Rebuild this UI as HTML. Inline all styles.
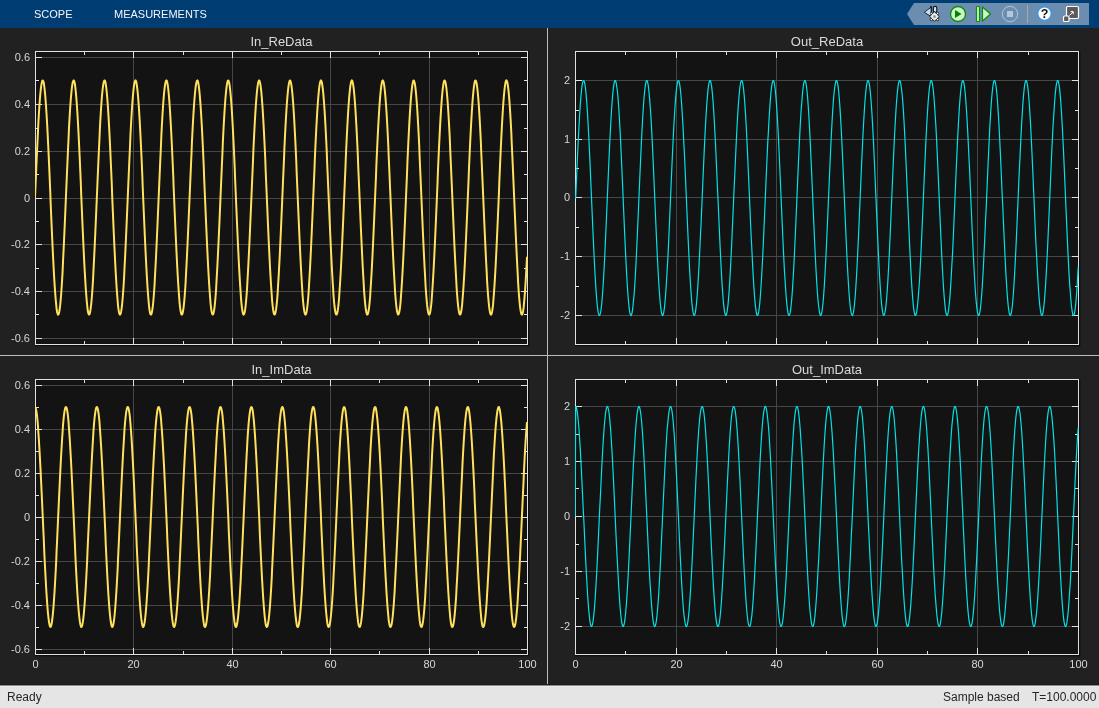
<!DOCTYPE html>
<html><head><meta charset="utf-8"><style>
svg,.tab,.st{will-change:transform}
html,body{margin:0;padding:0;width:1099px;height:708px;overflow:hidden;background:#212121;font-family:"Liberation Sans",sans-serif}
#tb{position:absolute;left:0;top:0;width:1099px;height:28px;background:#003d73}
.tab{position:absolute;top:7px;font-size:11px;color:#f2f5f8;line-height:14px;white-space:nowrap}
#sb{position:absolute;left:0;top:685px;width:1099px;height:23px;background:#e5e5e5;border-top:0;box-shadow:inset 0 1px 0 #8c8c8c, inset 0 2px 0 #ebebeb}
.st{position:absolute;top:5px;font-size:12px;line-height:14px;color:#262626;white-space:nowrap}
svg text.tl{font-size:11px;fill:#d6d6d6;font-family:"Liberation Sans",sans-serif}
svg text.tt{font-size:13px;fill:#dadada;font-family:"Liberation Sans",sans-serif}
</style></head><body>
<div id="tb">
<div class="tab" style="left:34px">SCOPE</div>
<div class="tab" style="left:114px">MEASUREMENTS</div>

<svg width="1099" height="28" style="position:absolute;left:0;top:0">
<path d="M914 3H1089V25H914L907 14Z" fill="#6a8db0"/>
<path d="M924.3 12.3 L931.3 7.2 V16.6 Z" fill="#c6e4ff" stroke="#1a1a1a" stroke-width="0.9" stroke-linejoin="round"/>
<path d="M931.3 6.2V12.5M930.2 7.3L931.3 6.2" stroke="#111" stroke-width="1.1" fill="none"/>
<rect x="933.4" y="6.4" width="3.4" height="5.8" rx="1.4" fill="#c6e4ff" stroke="#111" stroke-width="1.1"/>
<g transform="translate(934.5 16.5)">
<circle cx="-3.1" cy="-3.1" r="1.2" fill="#eee" stroke="#111" stroke-width="0.8"/>
<circle cx="3.1" cy="-3.1" r="1.2" fill="#eee" stroke="#111" stroke-width="0.8"/>
<circle cx="-3.1" cy="3.1" r="1.2" fill="#eee" stroke="#111" stroke-width="0.8"/>
<circle cx="3.1" cy="3.1" r="1.2" fill="#eee" stroke="#111" stroke-width="0.8"/>
<path d="M0 -4.9L2.3 -2.3L4.9 0L2.3 2.3L0 4.9L-2.3 2.3L-4.9 0L-2.3 -2.3Z" fill="#ececec" stroke="#111" stroke-width="0.9" stroke-linejoin="round"/>
<circle r="3" fill="#ececec"/>
<circle r="1.5" fill="#9a9a9a"/>
</g>
<circle cx="958" cy="14" r="7.5" fill="#ccf7c4" stroke="#0c8c0c" stroke-width="1.3"/>
<path d="M955 10V18L961.6 14Z" fill="#0a7d0a"/>
<rect x="976.5" y="6.5" width="3" height="15" rx="0.8" fill="#ccf7c4" stroke="#0c8c0c" stroke-width="1.2"/>
<path d="M982.5 7V21L990.5 14Z" fill="#ccf7c4" stroke="#0c8c0c" stroke-width="1.2" stroke-linejoin="round"/>
<circle cx="1010" cy="14" r="7.7" fill="none" stroke="#b2c6d8" stroke-width="1"/>
<rect x="1007" y="11" width="6" height="6" fill="#b4c8da"/>
<rect x="1027" y="5" width="1" height="18" fill="#aea89c"/>
<circle cx="1044.5" cy="13.6" r="6.8" fill="#fff" stroke="#3d96e8" stroke-width="1.4"/>
<text x="1044.6" y="18" text-anchor="middle" style="font:600 12.5px 'Liberation Sans',sans-serif" fill="#111">?</text>
<rect x="1066.5" y="6.5" width="12" height="12" rx="1.2" fill="#5b5b5b" stroke="#fff" stroke-width="1.2"/>
<path d="M1069.3 15.6L1073 11.9M1070.6 11.6H1073.2V14.2" stroke="#fff" stroke-width="1" fill="none"/>
<rect x="1063.5" y="16" width="5.5" height="5.5" rx="1" fill="#5b5b5b" stroke="#fff" stroke-width="1.2"/>
</svg>

</div>
<svg width="1099" height="657" style="position:absolute;left:0;top:28px" viewBox="0 28 1099 657">
<rect x="0" y="28" width="1099" height="657" fill="#212121"/>
<rect x="547" y="28" width="1" height="657" fill="#bdbdbd"/>
<rect x="0" y="355" width="1099" height="1" fill="#bdbdbd"/>
<rect x="35" y="51" width="493" height="294" fill="#131313"/>
<rect x="528" y="51" width="1" height="295" fill="#0e0e0e"/><rect x="529" y="51" width="1" height="296" fill="#1a1a1a"/><rect x="35" y="345" width="494" height="1" fill="#0e0e0e"/><rect x="35" y="346" width="494" height="1" fill="#1a1a1a"/>
<path d="M133.5 51V344M232.5 51V344M330.5 51V344M429.5 51V344M35 57.5H527M35 104.5H527M35 151.5H527M35 198.5H527M35 244.5H527M35 291.5H527M35 338.5H527" stroke="#464646" stroke-width="1" fill="none"/>
<path d="M35.5 51v7M35.5 345v-7M133.5 51v7M133.5 345v-7M232.5 51v7M232.5 345v-7M330.5 51v7M330.5 345v-7M429.5 51v7M429.5 345v-7M527.5 51v7M527.5 345v-7M84.5 51v4M84.5 345v-4M183.5 51v4M183.5 345v-4M281.5 51v4M281.5 345v-4M379.5 51v4M379.5 345v-4M478.5 51v4M478.5 345v-4M35 57.5h7M528 57.5h-7M35 104.5h7M528 104.5h-7M35 151.5h7M528 151.5h-7M35 198.5h7M528 198.5h-7M35 244.5h7M528 244.5h-7M35 291.5h7M528 291.5h-7M35 338.5h7M528 338.5h-7M35 80.5h4M528 80.5h-4M35 128.5h4M528 128.5h-4M35 174.5h4M528 174.5h-4M35 221.5h4M528 221.5h-4M35 268.5h4M528 268.5h-4M35 314.5h4M528 314.5h-4" stroke="#e0e0e0" stroke-width="1" fill="none"/>
<rect x="35.5" y="51.5" width="492" height="293" fill="none" stroke="#e0e0e0" stroke-width="1"/>
<clipPath id="c3551"><rect x="35" y="51" width="493" height="294"/></clipPath>
<polyline clip-path="url(#c3551)" points="35.0,197.5 35.5,185.8 36.0,174.2 36.5,162.9 37.0,151.9 37.5,141.4 38.0,131.4 38.4,122.1 38.9,113.5 39.4,105.8 39.9,99.0 40.4,93.2 40.9,88.4 41.4,84.7 41.9,82.1 42.4,80.7 42.9,80.5 43.4,81.4 43.9,83.5 44.3,86.7 44.8,91.0 45.3,96.4 45.8,102.8 46.3,110.2 46.8,118.4 47.3,127.4 47.8,137.1 48.3,147.5 48.8,158.3 49.3,169.5 49.8,181.0 50.3,192.6 50.7,204.3 51.2,216.0 51.7,227.4 52.2,238.6 52.7,249.3 53.2,259.5 53.7,269.1 54.2,278.0 54.7,286.1 55.2,293.3 55.7,299.5 56.2,304.8 56.6,308.9 57.1,312.0 57.6,313.8 58.1,314.6 58.6,314.1 59.1,312.5 59.6,309.8 60.1,305.9 60.6,300.9 61.1,294.9 61.6,288.0 62.1,280.1 62.6,271.4 63.0,262.0 63.5,251.9 64.0,241.3 64.5,230.2 65.0,218.8 65.5,207.2 66.0,195.5 66.5,183.9 67.0,172.3 67.5,161.0 68.0,150.1 68.5,139.6 68.9,129.8 69.4,120.6 69.9,112.1 70.4,104.6 70.9,97.9 71.4,92.3 71.9,87.7 72.4,84.2 72.9,81.8 73.4,80.6 73.9,80.5 74.4,81.7 74.9,83.9 75.3,87.4 75.8,91.9 76.3,97.4 76.8,104.0 77.3,111.5 77.8,119.9 78.3,129.0 78.8,138.8 79.3,149.2 79.8,160.1 80.3,171.4 80.8,182.9 81.2,194.6 81.7,206.3 82.2,217.9 82.7,229.3 83.2,240.4 83.7,251.1 84.2,261.2 84.7,270.7 85.2,279.4 85.7,287.4 86.2,294.4 86.7,300.5 87.2,305.5 87.6,309.5 88.1,312.4 88.6,314.0 89.1,314.6 89.6,313.9 90.1,312.1 90.6,309.2 91.1,305.1 91.6,300.0 92.1,293.8 92.6,286.7 93.1,278.7 93.5,269.9 94.0,260.3 94.5,250.1 95.0,239.4 95.5,228.3 96.0,216.9 96.5,205.3 97.0,193.6 97.5,181.9 98.0,170.4 98.5,159.2 99.0,148.3 99.5,137.9 99.9,128.2 100.4,119.1 100.9,110.8 101.4,103.4 101.9,96.9 102.4,91.4 102.9,87.0 103.4,83.7 103.9,81.5 104.4,80.5 104.9,80.6 105.4,82.0 105.8,84.4 106.3,88.0 106.8,92.7 107.3,98.5 107.8,105.2 108.3,112.9 108.8,121.4 109.3,130.6 109.8,140.6 110.3,151.0 110.8,162.0 111.3,173.3 111.8,184.9 112.2,196.6 112.7,208.3 113.2,219.8 113.7,231.2 114.2,242.2 114.7,252.8 115.2,262.8 115.7,272.2 116.2,280.8 116.7,288.6 117.2,295.5 117.7,301.4 118.1,306.3 118.6,310.1 119.1,312.7 119.6,314.2 120.1,314.6 120.6,313.7 121.1,311.7 121.6,308.6 122.1,304.3 122.6,299.0 123.1,292.7 123.6,285.4 124.1,277.3 124.5,268.3 125.0,258.7 125.5,248.4 126.0,237.6 126.5,226.4 127.0,214.9 127.5,203.3 128.0,191.6 128.5,180.0 129.0,168.5 129.5,157.3 130.0,146.5 130.4,136.3 130.9,126.6 131.4,117.7 131.9,109.5 132.4,102.2 132.9,95.9 133.4,90.6 133.9,86.4 134.4,83.2 134.9,81.3 135.4,80.4 135.9,80.8 136.4,82.3 136.8,85.0 137.3,88.8 137.8,93.6 138.3,99.5 138.8,106.4 139.3,114.2 139.8,122.9 140.3,132.2 140.8,142.3 141.3,152.9 141.8,163.9 142.3,175.3 142.7,186.8 143.2,198.5 143.7,210.2 144.2,221.8 144.7,233.1 145.2,244.0 145.7,254.5 146.2,264.5 146.7,273.7 147.2,282.2 147.7,289.9 148.2,296.6 148.7,302.3 149.1,307.0 149.6,310.6 150.1,313.1 150.6,314.4 151.1,314.5 151.6,313.5 152.1,311.3 152.6,308.0 153.1,303.5 153.6,298.0 154.1,291.5 154.6,284.1 155.0,275.8 155.5,266.7 156.0,257.0 156.5,246.6 157.0,235.7 157.5,224.5 158.0,213.0 158.5,201.3 159.0,189.6 159.5,178.0 160.0,166.6 160.5,155.5 161.0,144.8 161.4,134.6 161.9,125.0 162.4,116.2 162.9,108.2 163.4,101.1 163.9,94.9 164.4,89.8 164.9,85.8 165.4,82.8 165.9,81.0 166.4,80.4 166.9,81.0 167.3,82.7 167.8,85.5 168.3,89.5 168.8,94.6 169.3,100.6 169.8,107.7 170.3,115.6 170.8,124.4 171.3,133.9 171.8,144.0 172.3,154.7 172.8,165.8 173.3,177.2 173.7,188.8 174.2,200.5 174.7,212.2 175.2,223.7 175.7,235.0 176.2,245.8 176.7,256.3 177.2,266.1 177.7,275.2 178.2,283.6 178.7,291.1 179.2,297.6 179.6,303.2 180.1,307.7 180.6,311.1 181.1,313.4 181.6,314.5 182.1,314.4 182.6,313.2 183.1,310.8 183.6,307.3 184.1,302.7 184.6,297.0 185.1,290.4 185.6,282.8 186.0,274.3 186.5,265.1 187.0,255.3 187.5,244.8 188.0,233.9 188.5,222.6 189.0,211.0 189.5,199.4 190.0,187.7 190.5,176.1 191.0,164.7 191.5,153.6 191.9,143.0 192.4,132.9 192.9,123.5 193.4,114.8 193.9,107.0 194.4,100.0 194.9,94.0 195.4,89.1 195.9,85.2 196.4,82.5 196.9,80.9 197.4,80.4 197.9,81.2 198.3,83.1 198.8,86.1 199.3,90.3 199.8,95.5 200.3,101.8 200.8,109.0 201.3,117.0 201.8,125.9 202.3,135.6 202.8,145.8 203.3,156.5 203.8,167.7 204.2,179.1 204.7,190.8 205.2,202.5 205.7,214.1 206.2,225.6 206.7,236.8 207.2,247.6 207.7,257.9 208.2,267.7 208.7,276.7 209.2,284.9 209.7,292.2 210.2,298.6 210.6,304.0 211.1,308.3 211.6,311.5 212.1,313.6 212.6,314.5 213.1,314.3 213.6,312.9 214.1,310.3 214.6,306.6 215.1,301.8 215.6,296.0 216.1,289.1 216.5,281.4 217.0,272.8 217.5,263.5 218.0,253.5 218.5,243.0 219.0,232.0 219.5,220.7 220.0,209.1 220.5,197.4 221.0,185.7 221.5,174.1 222.0,162.8 222.5,151.8 222.9,141.3 223.4,131.3 223.9,122.0 224.4,113.4 224.9,105.7 225.4,98.9 225.9,93.1 226.4,88.3 226.9,84.7 227.4,82.1 227.9,80.7 228.4,80.5 228.8,81.4 229.3,83.5 229.8,86.7 230.3,91.1 230.8,96.5 231.3,102.9 231.8,110.3 232.3,118.5 232.8,127.5 233.3,137.2 233.8,147.6 234.3,158.4 234.8,169.6 235.2,181.1 235.7,192.7 236.2,204.4 236.7,216.1 237.2,227.5 237.7,238.7 238.2,249.4 238.7,259.6 239.2,269.2 239.7,278.1 240.2,286.2 240.7,293.4 241.1,299.6 241.6,304.8 242.1,308.9 242.6,312.0 243.1,313.9 243.6,314.6 244.1,314.1 244.6,312.5 245.1,309.7 245.6,305.9 246.1,300.9 246.6,294.9 247.1,287.9 247.5,280.0 248.0,271.3 248.5,261.9 249.0,251.8 249.5,241.2 250.0,230.1 250.5,218.7 251.0,207.1 251.5,195.4 252.0,183.8 252.5,172.2 253.0,160.9 253.4,150.0 253.9,139.6 254.4,129.7 254.9,120.5 255.4,112.1 255.9,104.5 256.4,97.9 256.9,92.2 257.4,87.6 257.9,84.1 258.4,81.8 258.9,80.6 259.4,80.5 259.8,81.7 260.3,84.0 260.8,87.4 261.3,91.9 261.8,97.5 262.3,104.1 262.8,111.6 263.3,120.0 263.8,129.1 264.3,138.9 264.8,149.3 265.3,160.2 265.7,171.5 266.2,183.0 266.7,194.7 267.2,206.4 267.7,218.0 268.2,229.4 268.7,240.5 269.2,251.2 269.7,261.3 270.2,270.8 270.7,279.5 271.2,287.4 271.7,294.5 272.1,300.5 272.6,305.6 273.1,309.5 273.6,312.4 274.1,314.1 274.6,314.6 275.1,313.9 275.6,312.1 276.1,309.2 276.6,305.1 277.1,300.0 277.6,293.8 278.0,286.6 278.5,278.6 279.0,269.8 279.5,260.2 280.0,250.1 280.5,239.3 281.0,228.2 281.5,216.8 282.0,205.2 282.5,193.5 283.0,181.8 283.5,170.3 284.0,159.1 284.4,148.2 284.9,137.9 285.4,128.1 285.9,119.0 286.4,110.7 286.9,103.3 287.4,96.9 287.9,91.4 288.4,87.0 288.9,83.7 289.4,81.5 289.9,80.5 290.3,80.7 290.8,82.0 291.3,84.5 291.8,88.1 292.3,92.8 292.8,98.5 293.3,105.3 293.8,112.9 294.3,121.4 294.8,130.7 295.3,140.6 295.8,151.1 296.3,162.1 296.7,173.4 297.2,185.0 297.7,196.7 298.2,208.4 298.7,219.9 299.2,231.3 299.7,242.3 300.2,252.9 300.7,262.9 301.2,272.3 301.7,280.9 302.2,288.7 302.6,295.6 303.1,301.5 303.6,306.3 304.1,310.1 304.6,312.7 305.1,314.2 305.6,314.6 306.1,313.7 306.6,311.7 307.1,308.6 307.6,304.3 308.1,299.0 308.6,292.6 309.0,285.4 309.5,277.2 310.0,268.2 310.5,258.6 311.0,248.3 311.5,237.5 312.0,226.3 312.5,214.8 313.0,203.2 313.5,191.5 314.0,179.8 314.5,168.4 314.9,157.2 315.4,146.4 315.9,136.2 316.4,126.5 316.9,117.6 317.4,109.4 317.9,102.2 318.4,95.9 318.9,90.6 319.4,86.3 319.9,83.2 320.4,81.3 320.9,80.4 321.3,80.8 321.8,82.3 322.3,85.0 322.8,88.8 323.3,93.7 323.8,99.6 324.3,106.5 324.8,114.3 325.3,122.9 325.8,132.3 326.3,142.4 326.8,153.0 327.2,164.0 327.7,175.4 328.2,186.9 328.7,198.6 329.2,210.3 329.7,221.9 330.2,233.2 330.7,244.1 331.2,254.6 331.7,264.5 332.2,273.8 332.7,282.3 333.2,289.9 333.6,296.6 334.1,302.4 334.6,307.0 335.1,310.6 335.6,313.1 336.1,314.4 336.6,314.5 337.1,313.5 337.6,311.3 338.1,307.9 338.6,303.5 339.1,298.0 339.5,291.5 340.0,284.0 340.5,275.7 341.0,266.7 341.5,256.9 342.0,246.5 342.5,235.6 343.0,224.4 343.5,212.9 344.0,201.2 344.5,189.5 345.0,177.9 345.5,166.5 345.9,155.4 346.4,144.7 346.9,134.5 347.4,125.0 347.9,116.2 348.4,108.1 348.9,101.0 349.4,94.9 349.9,89.8 350.4,85.7 350.9,82.8 351.4,81.0 351.8,80.4 352.3,81.0 352.8,82.7 353.3,85.6 353.8,89.5 354.3,94.6 354.8,100.7 355.3,107.8 355.8,115.7 356.3,124.5 356.8,134.0 357.3,144.1 357.8,154.8 358.2,165.9 358.7,177.3 359.2,188.9 359.7,200.6 360.2,212.3 360.7,223.8 361.2,235.1 361.7,245.9 362.2,256.3 362.7,266.2 363.2,275.3 363.7,283.6 364.1,291.1 364.6,297.7 365.1,303.2 365.6,307.7 366.1,311.1 366.6,313.4 367.1,314.5 367.6,314.4 368.1,313.2 368.6,310.8 369.1,307.3 369.6,302.6 370.1,297.0 370.5,290.3 371.0,282.7 371.5,274.3 372.0,265.1 372.5,255.2 373.0,244.7 373.5,233.8 374.0,222.5 374.5,210.9 375.0,199.3 375.5,187.6 376.0,176.0 376.4,164.6 376.9,153.5 377.4,142.9 377.9,132.9 378.4,123.4 378.9,114.7 379.4,106.9 379.9,99.9 380.4,94.0 380.9,89.0 381.4,85.2 381.9,82.4 382.4,80.8 382.8,80.4 383.3,81.2 383.8,83.1 384.3,86.1 384.8,90.3 385.3,95.6 385.8,101.8 386.3,109.0 386.8,117.1 387.3,126.0 387.8,135.6 388.3,145.9 388.7,156.6 389.2,167.8 389.7,179.2 390.2,190.9 390.7,202.6 391.2,214.2 391.7,225.7 392.2,236.9 392.7,247.7 393.2,258.0 393.7,267.7 394.2,276.7 394.7,284.9 395.1,292.3 395.6,298.7 396.1,304.0 396.6,308.4 397.1,311.6 397.6,313.6 398.1,314.5 398.6,314.3 399.1,312.8 399.6,310.3 400.1,306.6 400.6,301.8 401.0,295.9 401.5,289.1 402.0,281.3 402.5,272.8 403.0,263.4 403.5,253.5 404.0,242.9 404.5,231.9 405.0,220.6 405.5,209.0 406.0,197.3 406.5,185.6 407.0,174.0 407.4,162.7 407.9,151.7 408.4,141.2 408.9,131.2 409.4,121.9 409.9,113.4 410.4,105.7 410.9,98.9 411.4,93.1 411.9,88.3 412.4,84.6 412.9,82.1 413.3,80.7 413.8,80.5 414.3,81.4 414.8,83.5 415.3,86.8 415.8,91.1 416.3,96.5 416.8,103.0 417.3,110.3 417.8,118.6 418.3,127.6 418.8,137.3 419.3,147.6 419.7,158.5 420.2,169.7 420.7,181.2 421.2,192.8 421.7,204.5 422.2,216.2 422.7,227.6 423.2,238.8 423.7,249.5 424.2,259.7 424.7,269.3 425.2,278.2 425.6,286.2 426.1,293.4 426.6,299.6 427.1,304.9 427.6,309.0 428.1,312.0 428.6,313.9 429.1,314.6 429.6,314.1 430.1,312.5 430.6,309.7 431.1,305.8 431.6,300.8 432.0,294.8 432.5,287.8 433.0,280.0 433.5,271.2 434.0,261.8 434.5,251.7 435.0,241.1 435.5,230.0 436.0,218.6 436.5,207.0 437.0,195.3 437.5,183.6 437.9,172.1 438.4,160.8 438.9,149.9 439.4,139.5 439.9,129.6 440.4,120.4 440.9,112.0 441.4,104.4 441.9,97.8 442.4,92.2 442.9,87.6 443.4,84.1 443.9,81.8 444.3,80.6 444.8,80.6 445.3,81.7 445.8,84.0 446.3,87.4 446.8,92.0 447.3,97.5 447.8,104.1 448.3,111.7 448.8,120.0 449.3,129.2 449.8,139.0 450.2,149.4 450.7,160.3 451.2,171.6 451.7,183.1 452.2,194.8 452.7,206.5 453.2,218.1 453.7,229.5 454.2,240.6 454.7,251.3 455.2,261.4 455.7,270.8 456.2,279.6 456.6,287.5 457.1,294.5 457.6,300.6 458.1,305.6 458.6,309.6 459.1,312.4 459.6,314.1 460.1,314.6 460.6,313.9 461.1,312.1 461.6,309.1 462.1,305.1 462.5,299.9 463.0,293.7 463.5,286.6 464.0,278.6 464.5,269.7 465.0,260.1 465.5,250.0 466.0,239.2 466.5,228.1 467.0,216.7 467.5,205.1 468.0,193.4 468.5,181.7 468.9,170.2 469.4,159.0 469.9,148.1 470.4,137.8 470.9,128.0 471.4,119.0 471.9,110.7 472.4,103.3 472.9,96.8 473.4,91.3 473.9,86.9 474.4,83.6 474.8,81.5 475.3,80.5 475.8,80.7 476.3,82.0 476.8,84.5 477.3,88.1 477.8,92.8 478.3,98.6 478.8,105.3 479.3,113.0 479.8,121.5 480.3,130.8 480.8,140.7 481.2,151.2 481.7,162.2 482.2,173.5 482.7,185.1 483.2,196.8 483.7,208.5 484.2,220.1 484.7,231.4 485.2,242.4 485.7,253.0 486.2,263.0 486.7,272.4 487.1,281.0 487.6,288.8 488.1,295.6 488.6,301.5 489.1,306.4 489.6,310.1 490.1,312.8 490.6,314.2 491.1,314.6 491.6,313.7 492.1,311.7 492.6,308.5 493.1,304.3 493.5,298.9 494.0,292.6 494.5,285.3 495.0,277.1 495.5,268.2 496.0,258.5 496.5,248.2 497.0,237.4 497.5,226.2 498.0,214.7 498.5,203.1 499.0,191.4 499.4,179.7 499.9,168.3 500.4,157.1 500.9,146.3 501.4,136.1 501.9,126.4 502.4,117.5 502.9,109.4 503.4,102.1 503.9,95.8 504.4,90.5 504.9,86.3 505.4,83.2 505.8,81.2 506.3,80.4 506.8,80.8 507.3,82.3 507.8,85.0 508.3,88.8 508.8,93.7 509.3,99.7 509.8,106.6 510.3,114.4 510.8,123.0 511.3,132.4 511.7,142.5 512.2,153.1 512.7,164.1 513.2,175.5 513.7,187.0 514.2,198.7 514.7,210.4 515.2,222.0 515.7,233.3 516.2,244.2 516.7,254.7 517.2,264.6 517.7,273.9 518.1,282.4 518.6,290.0 519.1,296.7 519.6,302.4 520.1,307.1 520.6,310.6 521.1,313.1 521.6,314.4 522.1,314.5 522.6,313.4 523.1,311.2 523.6,307.9 524.0,303.4 524.5,297.9 525.0,291.4 525.5,284.0 526.0,275.7 526.5,266.6 527.0,256.8" fill="none" stroke="#ffe15c" stroke-width="2" stroke-linejoin="round"/>
<text x="30" y="60.5" text-anchor="end" class="tl">0.6</text>
<text x="30" y="107.5" text-anchor="end" class="tl">0.4</text>
<text x="30" y="154.5" text-anchor="end" class="tl">0.2</text>
<text x="30" y="201.5" text-anchor="end" class="tl">0</text>
<text x="30" y="247.5" text-anchor="end" class="tl">-0.2</text>
<text x="30" y="294.5" text-anchor="end" class="tl">-0.4</text>
<text x="30" y="341.5" text-anchor="end" class="tl">-0.6</text>
<text x="281.5" y="45.5" text-anchor="middle" class="tt">In_ReData</text>
<rect x="575" y="51" width="504" height="294" fill="#131313"/>
<rect x="1079" y="51" width="1" height="295" fill="#0e0e0e"/><rect x="1080" y="51" width="1" height="296" fill="#1a1a1a"/><rect x="575" y="345" width="505" height="1" fill="#0e0e0e"/><rect x="575" y="346" width="505" height="1" fill="#1a1a1a"/>
<path d="M676.5 51V344M776.5 51V344M877.5 51V344M977.5 51V344M575 80.5H1078M575 139.5H1078M575 197.5H1078M575 256.5H1078M575 315.5H1078" stroke="#464646" stroke-width="1" fill="none"/>
<path d="M575.5 51v7M575.5 345v-7M676.5 51v7M676.5 345v-7M776.5 51v7M776.5 345v-7M877.5 51v7M877.5 345v-7M977.5 51v7M977.5 345v-7M1078.5 51v7M1078.5 345v-7M625.5 51v4M625.5 345v-4M726.5 51v4M726.5 345v-4M826.5 51v4M826.5 345v-4M927.5 51v4M927.5 345v-4M1028.5 51v4M1028.5 345v-4M575 80.5h7M1079 80.5h-7M575 139.5h7M1079 139.5h-7M575 197.5h7M1079 197.5h-7M575 256.5h7M1079 256.5h-7M575 315.5h7M1079 315.5h-7M575 110.5h4M1079 110.5h-4M575 168.5h4M1079 168.5h-4M575 227.5h4M1079 227.5h-4M575 286.5h4M1079 286.5h-4" stroke="#e0e0e0" stroke-width="1" fill="none"/>
<rect x="575.5" y="51.5" width="503" height="293" fill="none" stroke="#e0e0e0" stroke-width="1"/>
<clipPath id="c57551"><rect x="575" y="51" width="504" height="294"/></clipPath>
<polyline clip-path="url(#c57551)" points="575.2,198.0 575.7,198.0 576.2,186.3 576.7,174.7 577.2,163.3 577.7,152.2 578.2,141.7 578.7,131.7 579.2,122.3 579.7,113.7 580.2,106.0 580.7,99.1 581.2,93.3 581.7,88.5 582.2,84.8 582.7,82.2 583.2,80.8 583.8,80.6 584.3,81.5 584.8,83.6 585.3,86.8 585.8,91.2 586.3,96.6 586.8,103.0 587.3,110.4 587.8,118.6 588.3,127.7 588.8,137.4 589.3,147.8 589.8,158.6 590.3,169.9 590.8,181.4 591.3,193.1 591.8,204.9 592.3,216.5 592.8,228.0 593.3,239.2 593.8,250.0 594.3,260.3 594.8,269.9 595.3,278.8 595.8,286.9 596.3,294.1 596.8,300.4 597.3,305.6 597.8,309.8 598.3,312.9 598.8,314.8 599.3,315.5 599.8,315.0 600.4,313.4 600.9,310.7 601.4,306.8 601.9,301.8 602.4,295.8 602.9,288.8 603.4,280.9 603.9,272.2 604.4,262.7 604.9,252.6 605.4,241.9 605.9,230.8 606.4,219.4 606.9,207.8 607.4,196.0 607.9,184.3 608.4,172.7 608.9,161.4 609.4,150.4 609.9,139.9 610.4,130.0 610.9,120.8 611.4,112.3 611.9,104.7 612.4,98.1 612.9,92.4 613.4,87.8 613.9,84.3 614.4,81.9 614.9,80.7 615.4,80.6 615.9,81.8 616.4,84.0 616.9,87.5 617.5,92.0 618.0,97.6 618.5,104.2 619.0,111.7 619.5,120.1 620.0,129.3 620.5,139.1 621.0,149.6 621.5,160.5 622.0,171.8 622.5,183.4 623.0,195.1 623.5,206.8 624.0,218.5 624.5,229.9 625.0,241.1 625.5,251.8 626.0,261.9 626.5,271.4 627.0,280.2 627.5,288.2 628.0,295.3 628.5,301.4 629.0,306.4 629.5,310.4 630.0,313.3 630.5,315.0 631.0,315.5 631.5,314.9 632.0,313.1 632.5,310.1 633.0,306.0 633.5,300.9 634.1,294.7 634.6,287.5 635.1,279.5 635.6,270.6 636.1,261.0 636.6,250.8 637.1,240.1 637.6,228.9 638.1,217.5 638.6,205.8 639.1,194.0 639.6,182.3 640.1,170.8 640.6,159.5 641.1,148.6 641.6,138.2 642.1,128.4 642.6,119.3 643.1,111.0 643.6,103.6 644.1,97.0 644.6,91.6 645.1,87.1 645.6,83.8 646.1,81.6 646.6,80.6 647.1,80.7 647.6,82.1 648.1,84.5 648.6,88.1 649.1,92.9 649.6,98.6 650.1,105.4 650.7,113.1 651.2,121.6 651.7,130.9 652.2,140.8 652.7,151.4 653.2,162.4 653.7,173.7 654.2,185.3 654.7,197.1 655.2,208.8 655.7,220.4 656.2,231.8 656.7,242.9 657.2,253.5 657.7,263.6 658.2,273.0 658.7,281.6 659.2,289.5 659.7,296.4 660.2,302.3 660.7,307.2 661.2,311.0 661.7,313.6 662.2,315.1 662.7,315.5 663.2,314.6 663.7,312.6 664.2,309.5 664.7,305.2 665.2,299.9 665.7,293.5 666.2,286.2 666.7,278.1 667.2,269.1 667.8,259.4 668.3,249.1 668.8,238.2 669.3,227.0 669.8,215.5 670.3,203.8 670.8,192.1 671.3,180.4 671.8,168.9 672.3,157.7 672.8,146.8 673.3,136.5 673.8,126.8 674.3,117.9 674.8,109.7 675.3,102.4 675.8,96.1 676.3,90.7 676.8,86.5 677.3,83.3 677.8,81.3 678.3,80.5 678.8,80.9 679.3,82.4 679.8,85.1 680.3,88.9 680.8,93.8 681.3,99.7 681.8,106.6 682.3,114.4 682.8,123.1 683.3,132.5 683.8,142.6 684.4,153.2 684.9,164.3 685.4,175.7 685.9,187.3 686.4,199.0 686.9,210.8 687.4,222.4 687.9,233.7 688.4,244.7 688.9,255.2 689.4,265.2 689.9,274.5 690.4,283.0 690.9,290.7 691.4,297.4 691.9,303.2 692.4,307.9 692.9,311.5 693.4,314.0 693.9,315.3 694.4,315.4 694.9,314.4 695.4,312.2 695.9,308.8 696.4,304.4 696.9,298.9 697.4,292.4 697.9,284.9 698.4,276.6 698.9,267.5 699.4,257.7 699.9,247.3 700.4,236.4 701.0,225.1 701.5,213.6 702.0,201.8 702.5,190.1 703.0,178.4 703.5,167.0 704.0,155.8 704.5,145.1 705.0,134.9 705.5,125.3 706.0,116.4 706.5,108.4 707.0,101.3 707.5,95.1 708.0,89.9 708.5,85.9 709.0,82.9 709.5,81.1 710.0,80.5 710.5,81.0 711.0,82.8 711.5,85.6 712.0,89.6 712.5,94.7 713.0,100.8 713.5,107.9 714.0,115.8 714.5,124.6 715.0,134.2 715.5,144.3 716.0,155.0 716.5,166.2 717.0,177.6 717.5,189.3 718.1,201.0 718.6,212.7 719.1,224.3 719.6,235.6 720.1,246.5 720.6,257.0 721.1,266.8 721.6,276.0 722.1,284.4 722.6,291.9 723.1,298.5 723.6,304.1 724.1,308.6 724.6,312.0 725.1,314.3 725.6,315.4 726.1,315.3 726.6,314.1 727.1,311.7 727.6,308.2 728.1,303.6 728.6,297.9 729.1,291.2 729.6,283.6 730.1,275.1 730.6,265.9 731.1,256.0 731.6,245.5 732.1,234.5 732.6,223.2 733.1,211.6 733.6,199.9 734.1,188.1 734.7,176.5 735.2,165.1 735.7,154.0 736.2,143.3 736.7,133.2 737.2,123.7 737.7,115.0 738.2,107.1 738.7,100.2 739.2,94.1 739.7,89.2 740.2,85.3 740.7,82.5 741.2,80.9 741.7,80.5 742.2,81.3 742.7,83.2 743.2,86.2 743.7,90.4 744.2,95.6 744.7,101.9 745.2,109.1 745.7,117.3 746.2,126.2 746.7,135.8 747.2,146.1 747.7,156.9 748.2,168.1 748.7,179.6 749.2,191.2 749.7,203.0 750.2,214.7 750.7,226.2 751.2,237.5 751.8,248.3 752.3,258.7 752.8,268.4 753.3,277.4 753.8,285.7 754.3,293.1 754.8,299.5 755.3,304.9 755.8,309.2 756.3,312.5 756.8,314.5 757.3,315.5 757.8,315.2 758.3,313.8 758.8,311.2 759.3,307.5 759.8,302.7 760.3,296.8 760.8,290.0 761.3,282.2 761.8,273.6 762.3,264.3 762.8,254.2 763.3,243.7 763.8,232.6 764.3,221.2 764.8,209.6 765.3,197.9 765.8,186.2 766.3,174.6 766.8,163.2 767.3,152.1 767.8,141.6 768.4,131.6 768.9,122.2 769.4,113.6 769.9,105.9 770.4,99.1 770.9,93.2 771.4,88.4 771.9,84.8 772.4,82.2 772.9,80.8 773.4,80.6 773.9,81.5 774.4,83.6 774.9,86.8 775.4,91.2 775.9,96.6 776.4,103.1 776.9,110.4 777.4,118.7 777.9,127.8 778.4,137.5 778.9,147.9 779.4,158.7 779.9,170.0 780.4,181.5 780.9,193.2 781.4,205.0 781.9,216.6 782.4,228.1 782.9,239.3 783.4,250.1 783.9,260.3 784.4,270.0 785.0,278.9 785.5,287.0 786.0,294.2 786.5,300.5 787.0,305.7 787.5,309.8 788.0,312.9 788.5,314.8 789.0,315.5 789.5,315.0 790.0,313.4 790.5,310.6 791.0,306.7 791.5,301.8 792.0,295.7 792.5,288.7 793.0,280.8 793.5,272.1 794.0,262.6 794.5,252.5 795.0,241.8 795.5,230.7 796.0,219.3 796.5,207.7 797.0,195.9 797.5,184.2 798.0,172.6 798.5,161.3 799.0,150.3 799.5,139.9 800.0,129.9 800.5,120.7 801.0,112.3 801.6,104.7 802.1,98.0 802.6,92.4 803.1,87.7 803.6,84.2 804.1,81.9 804.6,80.7 805.1,80.6 805.6,81.8 806.1,84.1 806.6,87.5 807.1,92.0 807.6,97.6 808.1,104.2 808.6,111.8 809.1,120.2 809.6,129.4 810.1,139.2 810.6,149.7 811.1,160.6 811.6,171.9 812.1,183.5 812.6,195.2 813.1,206.9 813.6,218.6 814.1,230.0 814.6,241.2 815.1,251.9 815.6,262.0 816.1,271.5 816.6,280.3 817.1,288.3 817.6,295.3 818.1,301.4 818.7,306.5 819.2,310.4 819.7,313.3 820.2,315.0 820.7,315.5 821.2,314.8 821.7,313.0 822.2,310.1 822.7,306.0 823.2,300.8 823.7,294.6 824.2,287.5 824.7,279.4 825.2,270.5 825.7,261.0 826.2,250.7 826.7,240.0 827.2,228.8 827.7,217.4 828.2,205.7 828.7,193.9 829.2,182.2 829.7,170.7 830.2,159.4 830.7,148.5 831.2,138.1 831.7,128.3 832.2,119.2 832.7,110.9 833.2,103.5 833.7,97.0 834.2,91.5 834.7,87.1 835.3,83.8 835.8,81.6 836.3,80.6 836.8,80.7 837.3,82.1 837.8,84.6 838.3,88.2 838.8,92.9 839.3,98.7 839.8,105.4 840.3,113.1 840.8,121.7 841.3,131.0 841.8,140.9 842.3,151.5 842.8,162.5 843.3,173.8 843.8,185.4 844.3,197.2 844.8,208.9 845.3,220.5 845.8,231.9 846.3,243.0 846.8,253.6 847.3,263.7 847.8,273.1 848.3,281.7 848.8,289.5 849.3,296.4 849.8,302.3 850.3,307.2 850.8,311.0 851.3,313.6 851.9,315.1 852.4,315.5 852.9,314.6 853.4,312.6 853.9,309.5 854.4,305.2 854.9,299.8 855.4,293.5 855.9,286.2 856.4,278.0 856.9,269.0 857.4,259.3 857.9,249.0 858.4,238.1 858.9,226.9 859.4,215.4 859.9,203.7 860.4,192.0 860.9,180.3 861.4,168.8 861.9,157.6 862.4,146.8 862.9,136.5 863.4,126.8 863.9,117.8 864.4,109.6 864.9,102.3 865.4,96.0 865.9,90.7 866.4,86.4 866.9,83.3 867.4,81.3 867.9,80.5 868.4,80.9 869.0,82.4 869.5,85.1 870.0,88.9 870.5,93.8 871.0,99.8 871.5,106.7 872.0,114.5 872.5,123.2 873.0,132.6 873.5,142.7 874.0,153.3 874.5,164.4 875.0,175.8 875.5,187.4 876.0,199.1 876.5,210.9 877.0,222.5 877.5,233.8 878.0,244.8 878.5,255.3 879.0,265.3 879.5,274.6 880.0,283.1 880.5,290.7 881.0,297.5 881.5,303.2 882.0,307.9 882.5,311.5 883.0,314.0 883.5,315.3 884.0,315.4 884.5,314.4 885.0,312.2 885.6,308.8 886.1,304.4 886.6,298.8 887.1,292.3 887.6,284.9 888.1,276.5 888.6,267.4 889.1,257.6 889.6,247.2 890.1,236.3 890.6,225.0 891.1,213.4 891.6,201.7 892.1,190.0 892.6,178.3 893.1,166.9 893.6,155.7 894.1,145.0 894.6,134.8 895.1,125.2 895.6,116.4 896.1,108.3 896.6,101.2 897.1,95.0 897.6,89.9 898.1,85.8 898.6,82.9 899.1,81.1 899.6,80.5 900.1,81.1 900.6,82.8 901.1,85.7 901.6,89.7 902.2,94.7 902.7,100.8 903.2,107.9 903.7,115.9 904.2,124.7 904.7,134.3 905.2,144.4 905.7,155.1 906.2,166.3 906.7,177.7 907.2,189.4 907.7,201.1 908.2,212.8 908.7,224.4 909.2,235.7 909.7,246.6 910.2,257.1 910.7,266.9 911.2,276.1 911.7,284.4 912.2,291.9 912.7,298.5 913.2,304.1 913.7,308.6 914.2,312.0 914.7,314.3 915.2,315.4 915.7,315.3 916.2,314.1 916.7,311.7 917.2,308.1 917.7,303.5 918.2,297.8 918.7,291.1 919.3,283.5 919.8,275.0 920.3,265.8 920.8,255.9 921.3,245.4 921.8,234.4 922.3,223.1 922.8,211.5 923.3,199.8 923.8,188.0 924.3,176.4 924.8,165.0 925.3,153.9 925.8,143.2 926.3,133.1 926.8,123.7 927.3,115.0 927.8,107.1 928.3,100.1 928.8,94.1 929.3,89.1 929.8,85.3 930.3,82.5 930.8,80.9 931.3,80.5 931.8,81.3 932.3,83.2 932.8,86.3 933.3,90.4 933.8,95.7 934.3,102.0 934.8,109.2 935.3,117.3 935.9,126.3 936.4,135.9 936.9,146.2 937.4,157.0 937.9,168.2 938.4,179.7 938.9,191.3 939.4,203.1 939.9,214.8 940.4,226.3 940.9,237.6 941.4,248.4 941.9,258.8 942.4,268.5 942.9,277.5 943.4,285.8 943.9,293.1 944.4,299.5 944.9,304.9 945.4,309.3 945.9,312.5 946.4,314.5 946.9,315.5 947.4,315.2 947.9,313.8 948.4,311.2 948.9,307.4 949.4,302.6 949.9,296.8 950.4,289.9 950.9,282.1 951.4,273.5 951.9,264.2 952.5,254.1 953.0,243.6 953.5,232.5 954.0,221.1 954.5,209.5 955.0,197.8 955.5,186.1 956.0,174.5 956.5,163.1 957.0,152.1 957.5,141.5 958.0,131.5 958.5,122.1 959.0,113.6 959.5,105.8 960.0,99.0 960.5,93.2 961.0,88.4 961.5,84.7 962.0,82.2 962.5,80.8 963.0,80.6 963.5,81.5 964.0,83.6 964.5,86.9 965.0,91.2 965.5,96.7 966.0,103.1 966.5,110.5 967.0,118.8 967.5,127.8 968.0,137.6 968.5,148.0 969.0,158.8 969.6,170.1 970.1,181.6 970.6,193.3 971.1,205.1 971.6,216.7 972.1,228.2 972.6,239.4 973.1,250.2 973.6,260.4 974.1,270.1 974.6,279.0 975.1,287.1 975.6,294.3 976.1,300.5 976.6,305.7 977.1,309.9 977.6,312.9 978.1,314.8 978.6,315.5 979.1,315.0 979.6,313.4 980.1,310.6 980.6,306.7 981.1,301.7 981.6,295.7 982.1,288.7 982.6,280.8 983.1,272.0 983.6,262.5 984.1,252.4 984.6,241.7 985.1,230.6 985.6,219.2 986.2,207.6 986.7,195.8 987.2,184.1 987.7,172.5 988.2,161.2 988.7,150.2 989.2,139.8 989.7,129.9 990.2,120.6 990.7,112.2 991.2,104.6 991.7,98.0 992.2,92.3 992.7,87.7 993.2,84.2 993.7,81.9 994.2,80.7 994.7,80.6 995.2,81.8 995.7,84.1 996.2,87.5 996.7,92.1 997.2,97.7 997.7,104.3 998.2,111.9 998.7,120.3 999.2,129.4 999.7,139.3 1000.2,149.8 1000.7,160.7 1001.2,172.0 1001.7,183.6 1002.2,195.3 1002.8,207.0 1003.3,218.7 1003.8,230.1 1004.3,241.3 1004.8,251.9 1005.3,262.1 1005.8,271.6 1006.3,280.4 1006.8,288.3 1007.3,295.4 1007.8,301.5 1008.3,306.5 1008.8,310.5 1009.3,313.3 1009.8,315.0 1010.3,315.5 1010.8,314.8 1011.3,313.0 1011.8,310.0 1012.3,305.9 1012.8,300.8 1013.3,294.6 1013.8,287.4 1014.3,279.3 1014.8,270.5 1015.3,260.9 1015.8,250.6 1016.3,239.9 1016.8,228.7 1017.3,217.3 1017.8,205.6 1018.3,193.8 1018.8,182.1 1019.3,170.6 1019.9,159.3 1020.4,148.4 1020.9,138.1 1021.4,128.3 1021.9,119.2 1022.4,110.9 1022.9,103.4 1023.4,96.9 1023.9,91.5 1024.4,87.0 1024.9,83.7 1025.4,81.6 1025.9,80.6 1026.4,80.7 1026.9,82.1 1027.4,84.6 1027.9,88.2 1028.4,93.0 1028.9,98.7 1029.4,105.5 1029.9,113.2 1030.4,121.7 1030.9,131.1 1031.4,141.0 1031.9,151.6 1032.4,162.6 1032.9,173.9 1033.4,185.5 1033.9,197.3 1034.4,209.0 1034.9,220.6 1035.4,232.0 1035.9,243.1 1036.5,253.7 1037.0,263.7 1037.5,273.1 1038.0,281.8 1038.5,289.6 1039.0,296.5 1039.5,302.4 1040.0,307.2 1040.5,311.0 1041.0,313.7 1041.5,315.2 1042.0,315.5 1042.5,314.6 1043.0,312.6 1043.5,309.4 1044.0,305.1 1044.5,299.8 1045.0,293.4 1045.5,286.1 1046.0,277.9 1046.5,268.9 1047.0,259.2 1047.5,248.9 1048.0,238.0 1048.5,226.8 1049.0,215.3 1049.5,203.6 1050.0,191.9 1050.5,180.2 1051.0,168.7 1051.5,157.5 1052.0,146.7 1052.5,136.4 1053.0,126.7 1053.6,117.7 1054.1,109.6 1054.6,102.3 1055.1,95.9 1055.6,90.6 1056.1,86.4 1056.6,83.3 1057.1,81.3 1057.6,80.5 1058.1,80.9 1058.6,82.4 1059.1,85.1 1059.6,88.9 1060.1,93.9 1060.6,99.8 1061.1,106.7 1061.6,114.6 1062.1,123.3 1062.6,132.7 1063.1,142.8 1063.6,153.4 1064.1,164.5 1064.6,175.9 1065.1,187.5 1065.6,199.2 1066.1,211.0 1066.6,222.6 1067.1,233.9 1067.6,244.9 1068.1,255.4 1068.6,265.4 1069.1,274.6 1069.6,283.2 1070.2,290.8 1070.7,297.5 1071.2,303.3 1071.7,308.0 1072.2,311.5 1072.7,314.0 1073.2,315.3 1073.7,315.4 1074.2,314.4 1074.7,312.1 1075.2,308.8 1075.7,304.3 1076.2,298.8 1076.7,292.3 1077.2,284.8 1077.7,276.4 1078.2,267.3" fill="none" stroke="#00e2e6" stroke-width="1.2" stroke-linejoin="round"/>
<text x="570" y="83.5" text-anchor="end" class="tl">2</text>
<text x="570" y="142.5" text-anchor="end" class="tl">1</text>
<text x="570" y="200.5" text-anchor="end" class="tl">0</text>
<text x="570" y="259.5" text-anchor="end" class="tl">-1</text>
<text x="570" y="318.5" text-anchor="end" class="tl">-2</text>
<text x="827.0" y="45.5" text-anchor="middle" class="tt">Out_ReData</text>
<rect x="35" y="379" width="493" height="276" fill="#131313"/>
<rect x="528" y="379" width="1" height="277" fill="#0e0e0e"/><rect x="529" y="379" width="1" height="278" fill="#1a1a1a"/><rect x="35" y="655" width="494" height="1" fill="#0e0e0e"/><rect x="35" y="656" width="494" height="1" fill="#1a1a1a"/>
<path d="M133.5 379V654M232.5 379V654M330.5 379V654M429.5 379V654M35 385.5H527M35 429.5H527M35 473.5H527M35 517.5H527M35 561.5H527M35 605.5H527M35 649.5H527" stroke="#464646" stroke-width="1" fill="none"/>
<path d="M35.5 379v7M35.5 655v-7M133.5 379v7M133.5 655v-7M232.5 379v7M232.5 655v-7M330.5 379v7M330.5 655v-7M429.5 379v7M429.5 655v-7M527.5 379v7M527.5 655v-7M84.5 379v4M84.5 655v-4M183.5 379v4M183.5 655v-4M281.5 379v4M281.5 655v-4M379.5 379v4M379.5 655v-4M478.5 379v4M478.5 655v-4M35 385.5h7M528 385.5h-7M35 429.5h7M528 429.5h-7M35 473.5h7M528 473.5h-7M35 517.5h7M528 517.5h-7M35 561.5h7M528 561.5h-7M35 605.5h7M528 605.5h-7M35 649.5h7M528 649.5h-7M35 407.5h4M528 407.5h-4M35 451.5h4M528 451.5h-4M35 495.5h4M528 495.5h-4M35 539.5h4M528 539.5h-4M35 583.5h4M528 583.5h-4M35 627.5h4M528 627.5h-4" stroke="#e0e0e0" stroke-width="1" fill="none"/>
<rect x="35.5" y="379.5" width="492" height="275" fill="none" stroke="#e0e0e0" stroke-width="1"/>
<clipPath id="c35379"><rect x="35" y="379" width="493" height="276"/></clipPath>
<polyline clip-path="url(#c35379)" points="35.0,407.0 35.5,407.5 36.0,409.2 36.5,411.9 37.0,415.7 37.5,420.5 38.0,426.2 38.4,432.9 38.9,440.4 39.4,448.6 39.9,457.6 40.4,467.1 40.9,477.1 41.4,487.6 41.9,498.3 42.4,509.2 42.9,520.2 43.4,531.2 43.9,542.0 44.3,552.6 44.8,562.8 45.3,572.5 45.8,581.7 46.3,590.3 46.8,598.1 47.3,605.1 47.8,611.3 48.3,616.4 48.8,620.6 49.3,623.8 49.8,625.9 50.3,626.9 50.7,626.8 51.2,625.6 51.7,623.3 52.2,620.0 52.7,615.6 53.2,610.3 53.7,604.0 54.2,596.9 54.7,588.9 55.2,580.2 55.7,570.9 56.2,561.1 56.6,550.8 57.1,540.2 57.6,529.3 58.1,518.4 58.6,507.4 59.1,496.5 59.6,485.8 60.1,475.4 60.6,465.5 61.1,456.0 61.6,447.2 62.1,439.0 62.6,431.7 63.0,425.2 63.5,419.6 64.0,415.0 64.5,411.4 65.0,408.8 65.5,407.4 66.0,407.0 66.5,407.7 67.0,409.6 67.5,412.5 68.0,416.4 68.5,421.4 68.9,427.3 69.4,434.1 69.9,441.7 70.4,450.1 70.9,459.1 71.4,468.8 71.9,478.9 72.4,489.4 72.9,500.1 73.4,511.1 73.9,522.1 74.4,533.0 74.9,543.8 75.3,554.3 75.8,564.5 76.3,574.1 76.8,583.2 77.3,591.7 77.8,599.4 78.3,606.2 78.8,612.2 79.3,617.2 79.8,621.2 80.3,624.2 80.8,626.1 81.2,627.0 81.7,626.7 82.2,625.3 82.7,622.9 83.2,619.3 83.7,614.8 84.2,609.3 84.7,602.9 85.2,595.6 85.7,587.5 86.2,578.7 86.7,569.3 87.2,559.4 87.6,549.0 88.1,538.4 88.6,527.5 89.1,516.5 89.6,505.5 90.1,494.7 90.6,484.0 91.1,473.7 91.6,463.8 92.1,454.5 92.6,445.8 93.1,437.8 93.5,430.5 94.0,424.2 94.5,418.7 95.0,414.3 95.5,410.9 96.0,408.5 96.5,407.2 97.0,407.1 97.5,408.0 98.0,410.0 98.5,413.1 99.0,417.2 99.5,422.3 99.9,428.4 100.4,435.3 100.9,443.1 101.4,451.6 101.9,460.7 102.4,470.4 102.9,480.6 103.4,491.2 103.9,502.0 104.4,512.9 104.9,523.9 105.4,534.8 105.8,545.6 106.3,556.0 106.8,566.1 107.3,575.7 107.8,584.7 108.3,593.0 108.8,600.6 109.3,607.3 109.8,613.1 110.3,618.0 110.8,621.8 111.3,624.6 111.8,626.4 112.2,627.0 112.7,626.5 113.2,625.0 113.7,622.3 114.2,618.7 114.7,614.0 115.2,608.3 115.7,601.7 116.2,594.3 116.7,586.1 117.2,577.2 117.7,567.7 118.1,557.7 118.6,547.3 119.1,536.6 119.6,525.7 120.1,514.7 120.6,503.7 121.1,492.9 121.6,482.3 122.1,472.0 122.6,462.2 123.1,453.0 123.6,444.4 124.1,436.5 124.5,429.4 125.0,423.2 125.5,417.9 126.0,413.7 126.5,410.4 127.0,408.2 127.5,407.1 128.0,407.1 128.5,408.2 129.0,410.4 129.5,413.7 130.0,418.0 130.4,423.2 130.9,429.5 131.4,436.5 131.9,444.4 132.4,453.1 132.9,462.3 133.4,472.1 133.9,482.4 134.4,493.0 134.9,503.8 135.4,514.8 135.9,525.8 136.4,536.7 136.8,547.4 137.3,557.8 137.8,567.8 138.3,577.3 138.8,586.1 139.3,594.3 139.8,601.8 140.3,608.3 140.8,614.0 141.3,618.7 141.8,622.4 142.3,625.0 142.7,626.5 143.2,627.0 143.7,626.3 144.2,624.6 144.7,621.8 145.2,617.9 145.7,613.1 146.2,607.2 146.7,600.5 147.2,592.9 147.7,584.6 148.2,575.6 148.7,566.0 149.1,556.0 149.6,545.5 150.1,534.7 150.6,523.8 151.1,512.8 151.6,501.9 152.1,491.1 152.6,480.5 153.1,470.3 153.6,460.6 154.1,451.5 154.6,443.0 155.0,435.2 155.5,428.3 156.0,422.2 156.5,417.1 157.0,413.0 157.5,410.0 158.0,408.0 158.5,407.1 159.0,407.2 159.5,408.5 160.0,410.9 160.5,414.3 161.0,418.8 161.4,424.2 161.9,430.6 162.4,437.8 162.9,445.8 163.4,454.6 163.9,463.9 164.4,473.8 164.9,484.1 165.4,494.8 165.9,505.6 166.4,516.6 166.9,527.6 167.3,538.5 167.8,549.1 168.3,559.5 168.8,569.4 169.3,578.8 169.8,587.6 170.3,595.6 170.8,602.9 171.3,609.4 171.8,614.9 172.3,619.4 172.8,622.9 173.3,625.3 173.7,626.7 174.2,627.0 174.7,626.1 175.2,624.2 175.7,621.2 176.2,617.2 176.7,612.1 177.2,606.2 177.7,599.3 178.2,591.6 178.7,583.1 179.2,574.0 179.6,564.4 180.1,554.2 180.6,543.7 181.1,532.9 181.6,522.0 182.1,511.0 182.6,500.0 183.1,489.3 183.6,478.8 184.1,468.7 184.6,459.0 185.1,450.0 185.6,441.6 186.0,434.0 186.5,427.2 187.0,421.3 187.5,416.4 188.0,412.4 188.5,409.6 189.0,407.7 189.5,407.0 190.0,407.4 190.5,408.9 191.0,411.4 191.5,415.0 191.9,419.6 192.4,425.2 192.9,431.7 193.4,439.1 193.9,447.3 194.4,456.1 194.9,465.5 195.4,475.5 195.9,485.9 196.4,496.6 196.9,507.5 197.4,518.5 197.9,529.4 198.3,540.3 198.8,550.9 199.3,561.2 199.8,571.0 200.3,580.3 200.8,589.0 201.3,596.9 201.8,604.1 202.3,610.3 202.8,615.7 203.3,620.0 203.8,623.4 204.2,625.6 204.7,626.8 205.2,626.9 205.7,625.9 206.2,623.8 206.7,620.6 207.2,616.4 207.7,611.2 208.2,605.1 208.7,598.0 209.2,590.2 209.7,581.7 210.2,572.4 210.6,562.7 211.1,552.5 211.6,541.9 212.1,531.1 212.6,520.1 213.1,509.1 213.6,498.2 214.1,487.5 214.6,477.0 215.1,467.0 215.6,457.5 216.1,448.5 216.5,440.3 217.0,432.8 217.5,426.2 218.0,420.4 218.5,415.6 219.0,411.9 219.5,409.2 220.0,407.5 220.5,407.0 221.0,407.6 221.5,409.2 222.0,411.9 222.5,415.7 222.9,420.5 223.4,426.3 223.9,432.9 224.4,440.4 224.9,448.7 225.4,457.6 225.9,467.2 226.4,477.2 226.9,487.7 227.4,498.4 227.9,509.3 228.4,520.3 228.8,531.3 229.3,542.1 229.8,552.7 230.3,562.9 230.8,572.6 231.3,581.8 231.8,590.4 232.3,598.2 232.8,605.2 233.3,611.3 233.8,616.5 234.3,620.7 234.8,623.8 235.2,625.9 235.7,626.9 236.2,626.8 236.7,625.6 237.2,623.3 237.7,620.0 238.2,615.6 238.7,610.2 239.2,603.9 239.7,596.8 240.2,588.8 240.7,580.2 241.1,570.8 241.6,561.0 242.1,550.7 242.6,540.1 243.1,529.2 243.6,518.3 244.1,507.3 244.6,496.4 245.1,485.7 245.6,475.3 246.1,465.4 246.6,455.9 247.1,447.1 247.5,439.0 248.0,431.6 248.5,425.1 249.0,419.5 249.5,414.9 250.0,411.4 250.5,408.8 251.0,407.4 251.5,407.0 252.0,407.8 252.5,409.6 253.0,412.5 253.4,416.5 253.9,421.4 254.4,427.3 254.9,434.1 255.4,441.8 255.9,450.2 256.4,459.2 256.9,468.8 257.4,479.0 257.9,489.5 258.4,500.2 258.9,511.2 259.4,522.2 259.8,533.1 260.3,543.9 260.8,554.4 261.3,564.5 261.8,574.2 262.3,583.3 262.8,591.7 263.3,599.4 263.8,606.3 264.3,612.2 264.8,617.3 265.3,621.3 265.7,624.3 266.2,626.2 266.7,627.0 267.2,626.7 267.7,625.3 268.2,622.8 268.7,619.3 269.2,614.8 269.7,609.2 270.2,602.8 270.7,595.5 271.2,587.4 271.7,578.6 272.1,569.2 272.6,559.3 273.1,548.9 273.6,538.3 274.1,527.4 274.6,516.4 275.1,505.4 275.6,494.6 276.1,483.9 276.6,473.6 277.1,463.8 277.6,454.4 278.0,445.7 278.5,437.7 279.0,430.5 279.5,424.1 280.0,418.7 280.5,414.3 281.0,410.9 281.5,408.5 282.0,407.2 282.5,407.1 283.0,408.0 283.5,410.0 284.0,413.1 284.4,417.2 284.9,422.3 285.4,428.4 285.9,435.4 286.4,443.1 286.9,451.6 287.4,460.8 287.9,470.5 288.4,480.7 288.9,491.3 289.4,502.1 289.9,513.0 290.3,524.0 290.8,534.9 291.3,545.7 291.8,556.1 292.3,566.2 292.8,575.8 293.3,584.8 293.8,593.1 294.3,600.6 294.8,607.3 295.3,613.2 295.8,618.0 296.3,621.9 296.7,624.7 297.2,626.4 297.7,627.0 298.2,626.5 298.7,625.0 299.2,622.3 299.7,618.6 300.2,613.9 300.7,608.2 301.2,601.6 301.7,594.2 302.2,586.0 302.6,577.1 303.1,567.6 303.6,557.6 304.1,547.2 304.6,536.5 305.1,525.6 305.6,514.6 306.1,503.6 306.6,492.8 307.1,482.2 307.6,471.9 308.1,462.1 308.6,452.9 309.0,444.3 309.5,436.4 310.0,429.3 310.5,423.1 311.0,417.9 311.5,413.6 312.0,410.4 312.5,408.2 313.0,407.1 313.5,407.1 314.0,408.3 314.5,410.5 314.9,413.7 315.4,418.0 315.9,423.3 316.4,429.5 316.9,436.6 317.4,444.5 317.9,453.1 318.4,462.4 318.9,472.2 319.4,482.5 319.9,493.1 320.4,503.9 320.9,514.9 321.3,525.8 321.8,536.8 322.3,547.5 322.8,557.9 323.3,567.8 323.8,577.3 324.3,586.2 324.8,594.4 325.3,601.8 325.8,608.4 326.3,614.0 326.8,618.7 327.2,622.4 327.7,625.0 328.2,626.6 328.7,627.0 329.2,626.3 329.7,624.6 330.2,621.8 330.7,617.9 331.2,613.0 331.7,607.2 332.2,600.4 332.7,592.9 333.2,584.5 333.6,575.5 334.1,565.9 334.6,555.9 335.1,545.4 335.6,534.6 336.1,523.7 336.6,512.7 337.1,501.8 337.6,491.0 338.1,480.4 338.6,470.3 339.1,460.5 339.5,451.4 340.0,442.9 340.5,435.2 341.0,428.2 341.5,422.2 342.0,417.1 342.5,413.0 343.0,409.9 343.5,408.0 344.0,407.1 344.5,407.3 345.0,408.6 345.5,410.9 345.9,414.4 346.4,418.8 346.9,424.3 347.4,430.7 347.9,437.9 348.4,445.9 348.9,454.6 349.4,464.0 349.9,473.9 350.4,484.2 350.9,494.9 351.4,505.7 351.8,516.7 352.3,527.7 352.8,538.6 353.3,549.2 353.8,559.6 354.3,569.5 354.8,578.9 355.3,587.6 355.8,595.7 356.3,603.0 356.8,609.4 357.3,614.9 357.8,619.4 358.2,622.9 358.7,625.3 359.2,626.7 359.7,627.0 360.2,626.1 360.7,624.2 361.2,621.2 361.7,617.1 362.2,612.1 362.7,606.1 363.2,599.2 363.7,591.5 364.1,583.1 364.6,574.0 365.1,564.3 365.6,554.1 366.1,543.6 366.6,532.8 367.1,521.9 367.6,510.9 368.1,499.9 368.6,489.2 369.1,478.7 369.6,468.6 370.1,459.0 370.5,449.9 371.0,441.6 371.5,433.9 372.0,427.2 372.5,421.3 373.0,416.3 373.5,412.4 374.0,409.5 374.5,407.7 375.0,407.0 375.5,407.4 376.0,408.9 376.4,411.4 376.9,415.1 377.4,419.7 377.9,425.3 378.4,431.8 378.9,439.2 379.4,447.3 379.9,456.2 380.4,465.6 380.9,475.6 381.4,486.0 381.9,496.7 382.4,507.6 382.8,518.6 383.3,529.5 383.8,540.4 384.3,551.0 384.8,561.3 385.3,571.1 385.8,580.4 386.3,589.0 386.8,597.0 387.3,604.1 387.8,610.4 388.3,615.7 388.7,620.1 389.2,623.4 389.7,625.7 390.2,626.8 390.7,626.9 391.2,625.9 391.7,623.8 392.2,620.6 392.7,616.4 393.2,611.2 393.7,605.0 394.2,598.0 394.7,590.1 395.1,581.6 395.6,572.4 396.1,562.6 396.6,552.4 397.1,541.8 397.6,531.0 398.1,520.0 398.6,509.0 399.1,498.1 399.6,487.4 400.1,477.0 400.6,466.9 401.0,457.4 401.5,448.5 402.0,440.2 402.5,432.7 403.0,426.1 403.5,420.4 404.0,415.6 404.5,411.9 405.0,409.2 405.5,407.5 406.0,407.0 406.5,407.6 407.0,409.2 407.4,412.0 407.9,415.8 408.4,420.6 408.9,426.3 409.4,433.0 409.9,440.5 410.4,448.8 410.9,457.7 411.4,467.3 411.9,477.3 412.4,487.8 412.9,498.5 413.3,509.4 413.8,520.4 414.3,531.4 414.8,542.2 415.3,552.7 415.8,563.0 416.3,572.7 416.8,581.9 417.3,590.4 417.8,598.2 418.3,605.2 418.8,611.4 419.3,616.5 419.7,620.7 420.2,623.9 420.7,625.9 421.2,626.9 421.7,626.8 422.2,625.6 422.7,623.3 423.2,619.9 423.7,615.6 424.2,610.2 424.7,603.9 425.2,596.7 425.6,588.8 426.1,580.1 426.6,570.8 427.1,560.9 427.6,550.6 428.1,540.0 428.6,529.1 429.1,518.2 429.6,507.2 430.1,496.3 430.6,485.6 431.1,475.2 431.6,465.3 432.0,455.9 432.5,447.0 433.0,438.9 433.5,431.6 434.0,425.1 434.5,419.5 435.0,414.9 435.5,411.3 436.0,408.8 436.5,407.4 437.0,407.0 437.5,407.8 437.9,409.6 438.4,412.5 438.9,416.5 439.4,421.5 439.9,427.4 440.4,434.2 440.9,441.8 441.4,450.2 441.9,459.3 442.4,468.9 442.9,479.1 443.4,489.6 443.9,500.3 444.3,511.3 444.8,522.3 445.3,533.2 445.8,544.0 446.3,554.5 446.8,564.6 447.3,574.3 447.8,583.4 448.3,591.8 448.8,599.5 449.3,606.3 449.8,612.3 450.2,617.3 450.7,621.3 451.2,624.3 451.7,626.2 452.2,627.0 452.7,626.7 453.2,625.3 453.7,622.8 454.2,619.3 454.7,614.7 455.2,609.2 455.7,602.7 456.2,595.4 456.6,587.3 457.1,578.5 457.6,569.1 458.1,559.2 458.6,548.9 459.1,538.2 459.6,527.3 460.1,516.3 460.6,505.3 461.1,494.5 461.6,483.8 462.1,473.5 462.5,463.7 463.0,454.3 463.5,445.6 464.0,437.6 464.5,430.4 465.0,424.1 465.5,418.7 466.0,414.2 466.5,410.8 467.0,408.5 467.5,407.2 468.0,407.1 468.5,408.0 468.9,410.0 469.4,413.1 469.9,417.3 470.4,422.4 470.9,428.5 471.4,435.4 471.9,443.2 472.4,451.7 472.9,460.9 473.4,470.6 473.9,480.8 474.4,491.3 474.8,502.2 475.3,513.1 475.8,524.1 476.3,535.0 476.8,545.8 477.3,556.2 477.8,566.3 478.3,575.9 478.8,584.8 479.3,593.1 479.8,600.7 480.3,607.4 480.8,613.2 481.2,618.0 481.7,621.9 482.2,624.7 482.7,626.4 483.2,627.0 483.7,626.5 484.2,624.9 484.7,622.3 485.2,618.6 485.7,613.9 486.2,608.2 486.7,601.6 487.1,594.1 487.6,585.9 488.1,577.0 488.6,567.5 489.1,557.5 489.6,547.1 490.1,536.4 490.6,525.5 491.1,514.5 491.6,503.5 492.1,492.7 492.6,482.1 493.1,471.8 493.5,462.1 494.0,452.8 494.5,444.2 495.0,436.3 495.5,429.3 496.0,423.1 496.5,417.8 497.0,413.6 497.5,410.4 498.0,408.2 498.5,407.1 499.0,407.1 499.4,408.3 499.9,410.5 500.4,413.8 500.9,418.1 501.4,423.4 501.9,429.6 502.4,436.7 502.9,444.6 503.4,453.2 503.9,462.5 504.4,472.3 504.9,482.5 505.4,493.1 505.8,504.0 506.3,515.0 506.8,525.9 507.3,536.8 507.8,547.5 508.3,557.9 508.8,567.9 509.3,577.4 509.8,586.3 510.3,594.5 510.8,601.9 511.3,608.4 511.7,614.1 512.2,618.8 512.7,622.4 513.2,625.0 513.7,626.6 514.2,627.0 514.7,626.3 515.2,624.6 515.7,621.7 516.2,617.9 516.7,613.0 517.2,607.1 517.7,600.4 518.1,592.8 518.6,584.5 519.1,575.4 519.6,565.9 520.1,555.8 520.6,545.3 521.1,534.5 521.6,523.6 522.1,512.6 522.6,501.7 523.1,490.9 523.6,480.3 524.0,470.2 524.5,460.5 525.0,451.3 525.5,442.8 526.0,435.1 526.5,428.2 527.0,422.1" fill="none" stroke="#ffe15c" stroke-width="2" stroke-linejoin="round"/>
<text x="30" y="388.5" text-anchor="end" class="tl">0.6</text>
<text x="30" y="432.5" text-anchor="end" class="tl">0.4</text>
<text x="30" y="476.5" text-anchor="end" class="tl">0.2</text>
<text x="30" y="520.5" text-anchor="end" class="tl">0</text>
<text x="30" y="564.5" text-anchor="end" class="tl">-0.2</text>
<text x="30" y="608.5" text-anchor="end" class="tl">-0.4</text>
<text x="30" y="652.5" text-anchor="end" class="tl">-0.6</text>
<text x="35.5" y="668" text-anchor="middle" class="tl">0</text>
<text x="133.5" y="668" text-anchor="middle" class="tl">20</text>
<text x="232.5" y="668" text-anchor="middle" class="tl">40</text>
<text x="330.5" y="668" text-anchor="middle" class="tl">60</text>
<text x="429.5" y="668" text-anchor="middle" class="tl">80</text>
<text x="527.5" y="668" text-anchor="middle" class="tl">100</text>
<text x="281.5" y="373.5" text-anchor="middle" class="tt">In_ImData</text>
<rect x="575" y="379" width="504" height="276" fill="#131313"/>
<rect x="1079" y="379" width="1" height="277" fill="#0e0e0e"/><rect x="1080" y="379" width="1" height="278" fill="#1a1a1a"/><rect x="575" y="655" width="505" height="1" fill="#0e0e0e"/><rect x="575" y="656" width="505" height="1" fill="#1a1a1a"/>
<path d="M676.5 379V654M776.5 379V654M877.5 379V654M977.5 379V654M575 406.5H1078M575 461.5H1078M575 516.5H1078M575 571.5H1078M575 626.5H1078" stroke="#464646" stroke-width="1" fill="none"/>
<path d="M575.5 379v7M575.5 655v-7M676.5 379v7M676.5 655v-7M776.5 379v7M776.5 655v-7M877.5 379v7M877.5 655v-7M977.5 379v7M977.5 655v-7M1078.5 379v7M1078.5 655v-7M625.5 379v4M625.5 655v-4M726.5 379v4M726.5 655v-4M826.5 379v4M826.5 655v-4M927.5 379v4M927.5 655v-4M1028.5 379v4M1028.5 655v-4M575 406.5h7M1079 406.5h-7M575 461.5h7M1079 461.5h-7M575 516.5h7M1079 516.5h-7M575 571.5h7M1079 571.5h-7M575 626.5h7M1079 626.5h-7M575 434.5h4M1079 434.5h-4M575 488.5h4M1079 488.5h-4M575 544.5h4M1079 544.5h-4M575 598.5h4M1079 598.5h-4" stroke="#e0e0e0" stroke-width="1" fill="none"/>
<rect x="575.5" y="379.5" width="503" height="275" fill="none" stroke="#e0e0e0" stroke-width="1"/>
<clipPath id="c575379"><rect x="575" y="379" width="504" height="276"/></clipPath>
<polyline clip-path="url(#c575379)" points="575.2,516.5 575.7,406.5 576.2,407.0 576.7,408.7 577.2,411.4 577.7,415.2 578.2,420.0 578.7,425.7 579.2,432.4 579.7,439.9 580.2,448.1 580.7,457.1 581.2,466.6 581.7,476.6 582.2,487.1 582.7,497.8 583.2,508.7 583.8,519.7 584.3,530.7 584.8,541.5 585.3,552.1 585.8,562.3 586.3,572.0 586.8,581.2 587.3,589.8 587.8,597.6 588.3,604.6 588.8,610.8 589.3,615.9 589.8,620.1 590.3,623.3 590.8,625.4 591.3,626.4 591.8,626.3 592.3,625.1 592.8,622.8 593.3,619.5 593.8,615.1 594.3,609.8 594.8,603.5 595.3,596.4 595.8,588.4 596.3,579.7 596.8,570.4 597.3,560.6 597.8,550.3 598.3,539.7 598.8,528.8 599.3,517.9 599.8,506.9 600.4,496.0 600.9,485.3 601.4,474.9 601.9,465.0 602.4,455.5 602.9,446.7 603.4,438.5 603.9,431.2 604.4,424.7 604.9,419.1 605.4,414.5 605.9,410.9 606.4,408.3 606.9,406.9 607.4,406.5 607.9,407.2 608.4,409.1 608.9,412.0 609.4,415.9 609.9,420.9 610.4,426.8 610.9,433.6 611.4,441.2 611.9,449.6 612.4,458.6 612.9,468.3 613.4,478.4 613.9,488.9 614.4,499.6 614.9,510.6 615.4,521.6 615.9,532.5 616.4,543.3 616.9,553.8 617.5,564.0 618.0,573.6 618.5,582.7 619.0,591.2 619.5,598.9 620.0,605.7 620.5,611.7 621.0,616.7 621.5,620.7 622.0,623.7 622.5,625.6 623.0,626.5 623.5,626.2 624.0,624.8 624.5,622.4 625.0,618.8 625.5,614.3 626.0,608.8 626.5,602.4 627.0,595.1 627.5,587.0 628.0,578.2 628.5,568.8 629.0,558.9 629.5,548.5 630.0,537.9 630.5,527.0 631.0,516.0 631.5,505.0 632.0,494.2 632.5,483.5 633.0,473.2 633.5,463.3 634.1,454.0 634.6,445.3 635.1,437.3 635.6,430.0 636.1,423.7 636.6,418.2 637.1,413.8 637.6,410.4 638.1,408.0 638.6,406.7 639.1,406.6 639.6,407.5 640.1,409.5 640.6,412.6 641.1,416.7 641.6,421.8 642.1,427.9 642.6,434.8 643.1,442.6 643.6,451.1 644.1,460.2 644.6,469.9 645.1,480.1 645.6,490.7 646.1,501.5 646.6,512.4 647.1,523.4 647.6,534.3 648.1,545.1 648.6,555.5 649.1,565.6 649.6,575.2 650.1,584.2 650.7,592.5 651.2,600.1 651.7,606.8 652.2,612.6 652.7,617.5 653.2,621.3 653.7,624.1 654.2,625.9 654.7,626.5 655.2,626.0 655.7,624.5 656.2,621.8 656.7,618.2 657.2,613.5 657.7,607.8 658.2,601.2 658.7,593.8 659.2,585.6 659.7,576.7 660.2,567.2 660.7,557.2 661.2,546.8 661.7,536.1 662.2,525.2 662.7,514.2 663.2,503.2 663.7,492.4 664.2,481.8 664.7,471.5 665.2,461.7 665.7,452.5 666.2,443.9 666.7,436.0 667.2,428.9 667.8,422.7 668.3,417.4 668.8,413.2 669.3,409.9 669.8,407.7 670.3,406.6 670.8,406.6 671.3,407.7 671.8,409.9 672.3,413.2 672.8,417.5 673.3,422.7 673.8,429.0 674.3,436.0 674.8,443.9 675.3,452.6 675.8,461.8 676.3,471.6 676.8,481.9 677.3,492.5 677.8,503.3 678.3,514.3 678.8,525.3 679.3,536.2 679.8,546.9 680.3,557.3 680.8,567.3 681.3,576.8 681.8,585.6 682.3,593.8 682.8,601.3 683.3,607.8 683.8,613.5 684.4,618.2 684.9,621.9 685.4,624.5 685.9,626.0 686.4,626.5 686.9,625.8 687.4,624.1 687.9,621.3 688.4,617.4 688.9,612.6 689.4,606.7 689.9,600.0 690.4,592.4 690.9,584.1 691.4,575.1 691.9,565.5 692.4,555.5 692.9,545.0 693.4,534.2 693.9,523.3 694.4,512.3 694.9,501.4 695.4,490.6 695.9,480.0 696.4,469.8 696.9,460.1 697.4,451.0 697.9,442.5 698.4,434.7 698.9,427.8 699.4,421.7 699.9,416.6 700.4,412.5 701.0,409.5 701.5,407.5 702.0,406.6 702.5,406.7 703.0,408.0 703.5,410.4 704.0,413.8 704.5,418.3 705.0,423.7 705.5,430.1 706.0,437.3 706.5,445.3 707.0,454.1 707.5,463.4 708.0,473.3 708.5,483.6 709.0,494.3 709.5,505.1 710.0,516.1 710.5,527.1 711.0,538.0 711.5,548.6 712.0,559.0 712.5,568.9 713.0,578.3 713.5,587.1 714.0,595.1 714.5,602.4 715.0,608.9 715.5,614.4 716.0,618.9 716.5,622.4 717.0,624.8 717.5,626.2 718.1,626.5 718.6,625.6 719.1,623.7 719.6,620.7 720.1,616.7 720.6,611.6 721.1,605.7 721.6,598.8 722.1,591.1 722.6,582.6 723.1,573.5 723.6,563.9 724.1,553.7 724.6,543.2 725.1,532.4 725.6,521.5 726.1,510.5 726.6,499.5 727.1,488.8 727.6,478.3 728.1,468.2 728.6,458.5 729.1,449.5 729.6,441.1 730.1,433.5 730.6,426.7 731.1,420.8 731.6,415.9 732.1,411.9 732.6,409.1 733.1,407.2 733.6,406.5 734.1,406.9 734.7,408.4 735.2,410.9 735.7,414.5 736.2,419.1 736.7,424.7 737.2,431.2 737.7,438.6 738.2,446.8 738.7,455.6 739.2,465.0 739.7,475.0 740.2,485.4 740.7,496.1 741.2,507.0 741.7,518.0 742.2,528.9 742.7,539.8 743.2,550.4 743.7,560.7 744.2,570.5 744.7,579.8 745.2,588.5 745.7,596.4 746.2,603.6 746.7,609.8 747.2,615.2 747.7,619.5 748.2,622.9 748.7,625.1 749.2,626.3 749.7,626.4 750.2,625.4 750.7,623.3 751.2,620.1 751.8,615.9 752.3,610.7 752.8,604.6 753.3,597.5 753.8,589.7 754.3,581.2 754.8,571.9 755.3,562.2 755.8,552.0 756.3,541.4 756.8,530.6 757.3,519.6 757.8,508.6 758.3,497.7 758.8,487.0 759.3,476.5 759.8,466.5 760.3,457.0 760.8,448.0 761.3,439.8 761.8,432.3 762.3,425.7 762.8,419.9 763.3,415.1 763.8,411.4 764.3,408.7 764.8,407.0 765.3,406.5 765.8,407.1 766.3,408.7 766.8,411.4 767.3,415.2 767.8,420.0 768.4,425.8 768.9,432.4 769.4,439.9 769.9,448.2 770.4,457.1 770.9,466.7 771.4,476.7 771.9,487.2 772.4,497.9 772.9,508.8 773.4,519.8 773.9,530.8 774.4,541.6 774.9,552.2 775.4,562.4 775.9,572.1 776.4,581.3 776.9,589.9 777.4,597.7 777.9,604.7 778.4,610.8 778.9,616.0 779.4,620.2 779.9,623.3 780.4,625.4 780.9,626.4 781.4,626.3 781.9,625.1 782.4,622.8 782.9,619.5 783.4,615.1 783.9,609.7 784.4,603.4 785.0,596.3 785.5,588.3 786.0,579.7 786.5,570.3 787.0,560.5 787.5,550.2 788.0,539.6 788.5,528.7 789.0,517.8 789.5,506.8 790.0,495.9 790.5,485.2 791.0,474.8 791.5,464.9 792.0,455.4 792.5,446.6 793.0,438.5 793.5,431.1 794.0,424.6 794.5,419.0 795.0,414.4 795.5,410.9 796.0,408.3 796.5,406.9 797.0,406.5 797.5,407.3 798.0,409.1 798.5,412.0 799.0,416.0 799.5,420.9 800.0,426.8 800.5,433.6 801.0,441.3 801.6,449.7 802.1,458.7 802.6,468.3 803.1,478.5 803.6,489.0 804.1,499.7 804.6,510.7 805.1,521.7 805.6,532.6 806.1,543.4 806.6,553.9 807.1,564.0 807.6,573.7 808.1,582.8 808.6,591.2 809.1,598.9 809.6,605.8 810.1,611.7 810.6,616.8 811.1,620.8 811.6,623.8 812.1,625.7 812.6,626.5 813.1,626.2 813.6,624.8 814.1,622.3 814.6,618.8 815.1,614.3 815.6,608.7 816.1,602.3 816.6,595.0 817.1,586.9 817.6,578.1 818.1,568.7 818.7,558.8 819.2,548.4 819.7,537.8 820.2,526.9 820.7,515.9 821.2,504.9 821.7,494.1 822.2,483.4 822.7,473.1 823.2,463.3 823.7,453.9 824.2,445.2 824.7,437.2 825.2,430.0 825.7,423.6 826.2,418.2 826.7,413.8 827.2,410.4 827.7,408.0 828.2,406.7 828.7,406.6 829.2,407.5 829.7,409.5 830.2,412.6 830.7,416.7 831.2,421.8 831.7,427.9 832.2,434.9 832.7,442.6 833.2,451.1 833.7,460.3 834.2,470.0 834.7,480.2 835.3,490.8 835.8,501.6 836.3,512.5 836.8,523.5 837.3,534.4 837.8,545.2 838.3,555.6 838.8,565.7 839.3,575.3 839.8,584.3 840.3,592.6 840.8,600.1 841.3,606.8 841.8,612.7 842.3,617.5 842.8,621.4 843.3,624.2 843.8,625.9 844.3,626.5 844.8,626.0 845.3,624.5 845.8,621.8 846.3,618.1 846.8,613.4 847.3,607.7 847.8,601.1 848.3,593.7 848.8,585.5 849.3,576.6 849.8,567.1 850.3,557.1 850.8,546.7 851.3,536.0 851.9,525.1 852.4,514.1 852.9,503.1 853.4,492.3 853.9,481.7 854.4,471.4 854.9,461.6 855.4,452.4 855.9,443.8 856.4,435.9 856.9,428.8 857.4,422.6 857.9,417.4 858.4,413.1 858.9,409.9 859.4,407.7 859.9,406.6 860.4,406.6 860.9,407.8 861.4,410.0 861.9,413.2 862.4,417.5 862.9,422.8 863.4,429.0 863.9,436.1 864.4,444.0 864.9,452.6 865.4,461.9 865.9,471.7 866.4,482.0 866.9,492.6 867.4,503.4 867.9,514.4 868.4,525.3 869.0,536.3 869.5,547.0 870.0,557.4 870.5,567.3 871.0,576.8 871.5,585.7 872.0,593.9 872.5,601.3 873.0,607.9 873.5,613.5 874.0,618.2 874.5,621.9 875.0,624.5 875.5,626.1 876.0,626.5 876.5,625.8 877.0,624.1 877.5,621.3 878.0,617.4 878.5,612.5 879.0,606.7 879.5,599.9 880.0,592.4 880.5,584.0 881.0,575.0 881.5,565.4 882.0,555.4 882.5,544.9 883.0,534.1 883.5,523.2 884.0,512.2 884.5,501.3 885.0,490.5 885.6,479.9 886.1,469.8 886.6,460.0 887.1,450.9 887.6,442.4 888.1,434.7 888.6,427.7 889.1,421.7 889.6,416.6 890.1,412.5 890.6,409.4 891.1,407.5 891.6,406.6 892.1,406.8 892.6,408.1 893.1,410.4 893.6,413.9 894.1,418.3 894.6,423.8 895.1,430.2 895.6,437.4 896.1,445.4 896.6,454.1 897.1,463.5 897.6,473.4 898.1,483.7 898.6,494.4 899.1,505.2 899.6,516.2 900.1,527.2 900.6,538.1 901.1,548.7 901.6,559.1 902.2,569.0 902.7,578.4 903.2,587.1 903.7,595.2 904.2,602.5 904.7,608.9 905.2,614.4 905.7,618.9 906.2,622.4 906.7,624.8 907.2,626.2 907.7,626.5 908.2,625.6 908.7,623.7 909.2,620.7 909.7,616.6 910.2,611.6 910.7,605.6 911.2,598.7 911.7,591.0 912.2,582.6 912.7,573.5 913.2,563.8 913.7,553.6 914.2,543.1 914.7,532.3 915.2,521.4 915.7,510.4 916.2,499.4 916.7,488.7 917.2,478.2 917.7,468.1 918.2,458.5 918.7,449.4 919.3,441.1 919.8,433.4 920.3,426.7 920.8,420.8 921.3,415.8 921.8,411.9 922.3,409.0 922.8,407.2 923.3,406.5 923.8,406.9 924.3,408.4 924.8,410.9 925.3,414.6 925.8,419.2 926.3,424.8 926.8,431.3 927.3,438.7 927.8,446.8 928.3,455.7 928.8,465.1 929.3,475.1 929.8,485.5 930.3,496.2 930.8,507.1 931.3,518.1 931.8,529.0 932.3,539.9 932.8,550.5 933.3,560.8 933.8,570.6 934.3,579.9 934.8,588.5 935.3,596.5 935.9,603.6 936.4,609.9 936.9,615.2 937.4,619.6 937.9,622.9 938.4,625.2 938.9,626.3 939.4,626.4 939.9,625.4 940.4,623.3 940.9,620.1 941.4,615.9 941.9,610.7 942.4,604.5 942.9,597.5 943.4,589.6 943.9,581.1 944.4,571.9 944.9,562.1 945.4,551.9 945.9,541.3 946.4,530.5 946.9,519.5 947.4,508.5 947.9,497.6 948.4,486.9 948.9,476.5 949.4,466.4 949.9,456.9 950.4,448.0 950.9,439.7 951.4,432.2 951.9,425.6 952.5,419.9 953.0,415.1 953.5,411.4 954.0,408.7 954.5,407.0 955.0,406.5 955.5,407.1 956.0,408.7 956.5,411.5 957.0,415.3 957.5,420.1 958.0,425.8 958.5,432.5 959.0,440.0 959.5,448.3 960.0,457.2 960.5,466.8 961.0,476.8 961.5,487.3 962.0,498.0 962.5,508.9 963.0,519.9 963.5,530.9 964.0,541.7 964.5,552.2 965.0,562.5 965.5,572.2 966.0,581.4 966.5,589.9 967.0,597.7 967.5,604.7 968.0,610.9 968.5,616.0 969.0,620.2 969.6,623.4 970.1,625.4 970.6,626.4 971.1,626.3 971.6,625.1 972.1,622.8 972.6,619.4 973.1,615.1 973.6,609.7 974.1,603.4 974.6,596.2 975.1,588.3 975.6,579.6 976.1,570.3 976.6,560.4 977.1,550.1 977.6,539.5 978.1,528.6 978.6,517.7 979.1,506.7 979.6,495.8 980.1,485.1 980.6,474.7 981.1,464.8 981.6,455.4 982.1,446.5 982.6,438.4 983.1,431.1 983.6,424.6 984.1,419.0 984.6,414.4 985.1,410.8 985.6,408.3 986.2,406.9 986.7,406.5 987.2,407.3 987.7,409.1 988.2,412.0 988.7,416.0 989.2,421.0 989.7,426.9 990.2,433.7 990.7,441.3 991.2,449.7 991.7,458.8 992.2,468.4 992.7,478.6 993.2,489.1 993.7,499.8 994.2,510.8 994.7,521.8 995.2,532.7 995.7,543.5 996.2,554.0 996.7,564.1 997.2,573.8 997.7,582.9 998.2,591.3 998.7,599.0 999.2,605.8 999.7,611.8 1000.2,616.8 1000.7,620.8 1001.2,623.8 1001.7,625.7 1002.2,626.5 1002.8,626.2 1003.3,624.8 1003.8,622.3 1004.3,618.8 1004.8,614.2 1005.3,608.7 1005.8,602.2 1006.3,594.9 1006.8,586.8 1007.3,578.0 1007.8,568.6 1008.3,558.7 1008.8,548.4 1009.3,537.7 1009.8,526.8 1010.3,515.8 1010.8,504.8 1011.3,494.0 1011.8,483.3 1012.3,473.0 1012.8,463.2 1013.3,453.8 1013.8,445.1 1014.3,437.1 1014.8,429.9 1015.3,423.6 1015.8,418.2 1016.3,413.7 1016.8,410.3 1017.3,408.0 1017.8,406.7 1018.3,406.6 1018.8,407.5 1019.3,409.5 1019.9,412.6 1020.4,416.8 1020.9,421.9 1021.4,428.0 1021.9,434.9 1022.4,442.7 1022.9,451.2 1023.4,460.4 1023.9,470.1 1024.4,480.3 1024.9,490.8 1025.4,501.7 1025.9,512.6 1026.4,523.6 1026.9,534.5 1027.4,545.3 1027.9,555.7 1028.4,565.8 1028.9,575.4 1029.4,584.3 1029.9,592.6 1030.4,600.2 1030.9,606.9 1031.4,612.7 1031.9,617.5 1032.4,621.4 1032.9,624.2 1033.4,625.9 1033.9,626.5 1034.4,626.0 1034.9,624.4 1035.4,621.8 1035.9,618.1 1036.5,613.4 1037.0,607.7 1037.5,601.1 1038.0,593.6 1038.5,585.4 1039.0,576.5 1039.5,567.0 1040.0,557.0 1040.5,546.6 1041.0,535.9 1041.5,525.0 1042.0,514.0 1042.5,503.0 1043.0,492.2 1043.5,481.6 1044.0,471.3 1044.5,461.6 1045.0,452.3 1045.5,443.7 1046.0,435.8 1046.5,428.8 1047.0,422.6 1047.5,417.3 1048.0,413.1 1048.5,409.9 1049.0,407.7 1049.5,406.6 1050.0,406.6 1050.5,407.8 1051.0,410.0 1051.5,413.3 1052.0,417.6 1052.5,422.9 1053.0,429.1 1053.6,436.2 1054.1,444.1 1054.6,452.7 1055.1,462.0 1055.6,471.8 1056.1,482.0 1056.6,492.6 1057.1,503.5 1057.6,514.5 1058.1,525.4 1058.6,536.3 1059.1,547.0 1059.6,557.4 1060.1,567.4 1060.6,576.9 1061.1,585.8 1061.6,594.0 1062.1,601.4 1062.6,607.9 1063.1,613.6 1063.6,618.3 1064.1,621.9 1064.6,624.5 1065.1,626.1 1065.6,626.5 1066.1,625.8 1066.6,624.1 1067.1,621.2 1067.6,617.4 1068.1,612.5 1068.6,606.6 1069.1,599.9 1069.6,592.3 1070.2,584.0 1070.7,574.9 1071.2,565.4 1071.7,555.3 1072.2,544.8 1072.7,534.0 1073.2,523.1 1073.7,512.1 1074.2,501.2 1074.7,490.4 1075.2,479.8 1075.7,469.7 1076.2,460.0 1076.7,450.8 1077.2,442.3 1077.7,434.6 1078.2,427.7" fill="none" stroke="#00e2e6" stroke-width="1.2" stroke-linejoin="round"/>
<text x="570" y="409.5" text-anchor="end" class="tl">2</text>
<text x="570" y="464.5" text-anchor="end" class="tl">1</text>
<text x="570" y="519.5" text-anchor="end" class="tl">0</text>
<text x="570" y="574.5" text-anchor="end" class="tl">-1</text>
<text x="570" y="629.5" text-anchor="end" class="tl">-2</text>
<text x="575.5" y="668" text-anchor="middle" class="tl">0</text>
<text x="676.5" y="668" text-anchor="middle" class="tl">20</text>
<text x="776.5" y="668" text-anchor="middle" class="tl">40</text>
<text x="877.5" y="668" text-anchor="middle" class="tl">60</text>
<text x="977.5" y="668" text-anchor="middle" class="tl">80</text>
<text x="1078.5" y="668" text-anchor="middle" class="tl">100</text>
<text x="827.0" y="373.5" text-anchor="middle" class="tt">Out_ImData</text>
<rect x="0" y="684" width="1099" height="1" fill="#1b1b1b"/>
</svg>
<div id="sb">
<div class="st" style="left:7px">Ready</div>
<div class="st" style="left:943px">Sample based</div>
<div class="st" style="left:1032px">T=100.0000</div>
</div>
</body></html>
